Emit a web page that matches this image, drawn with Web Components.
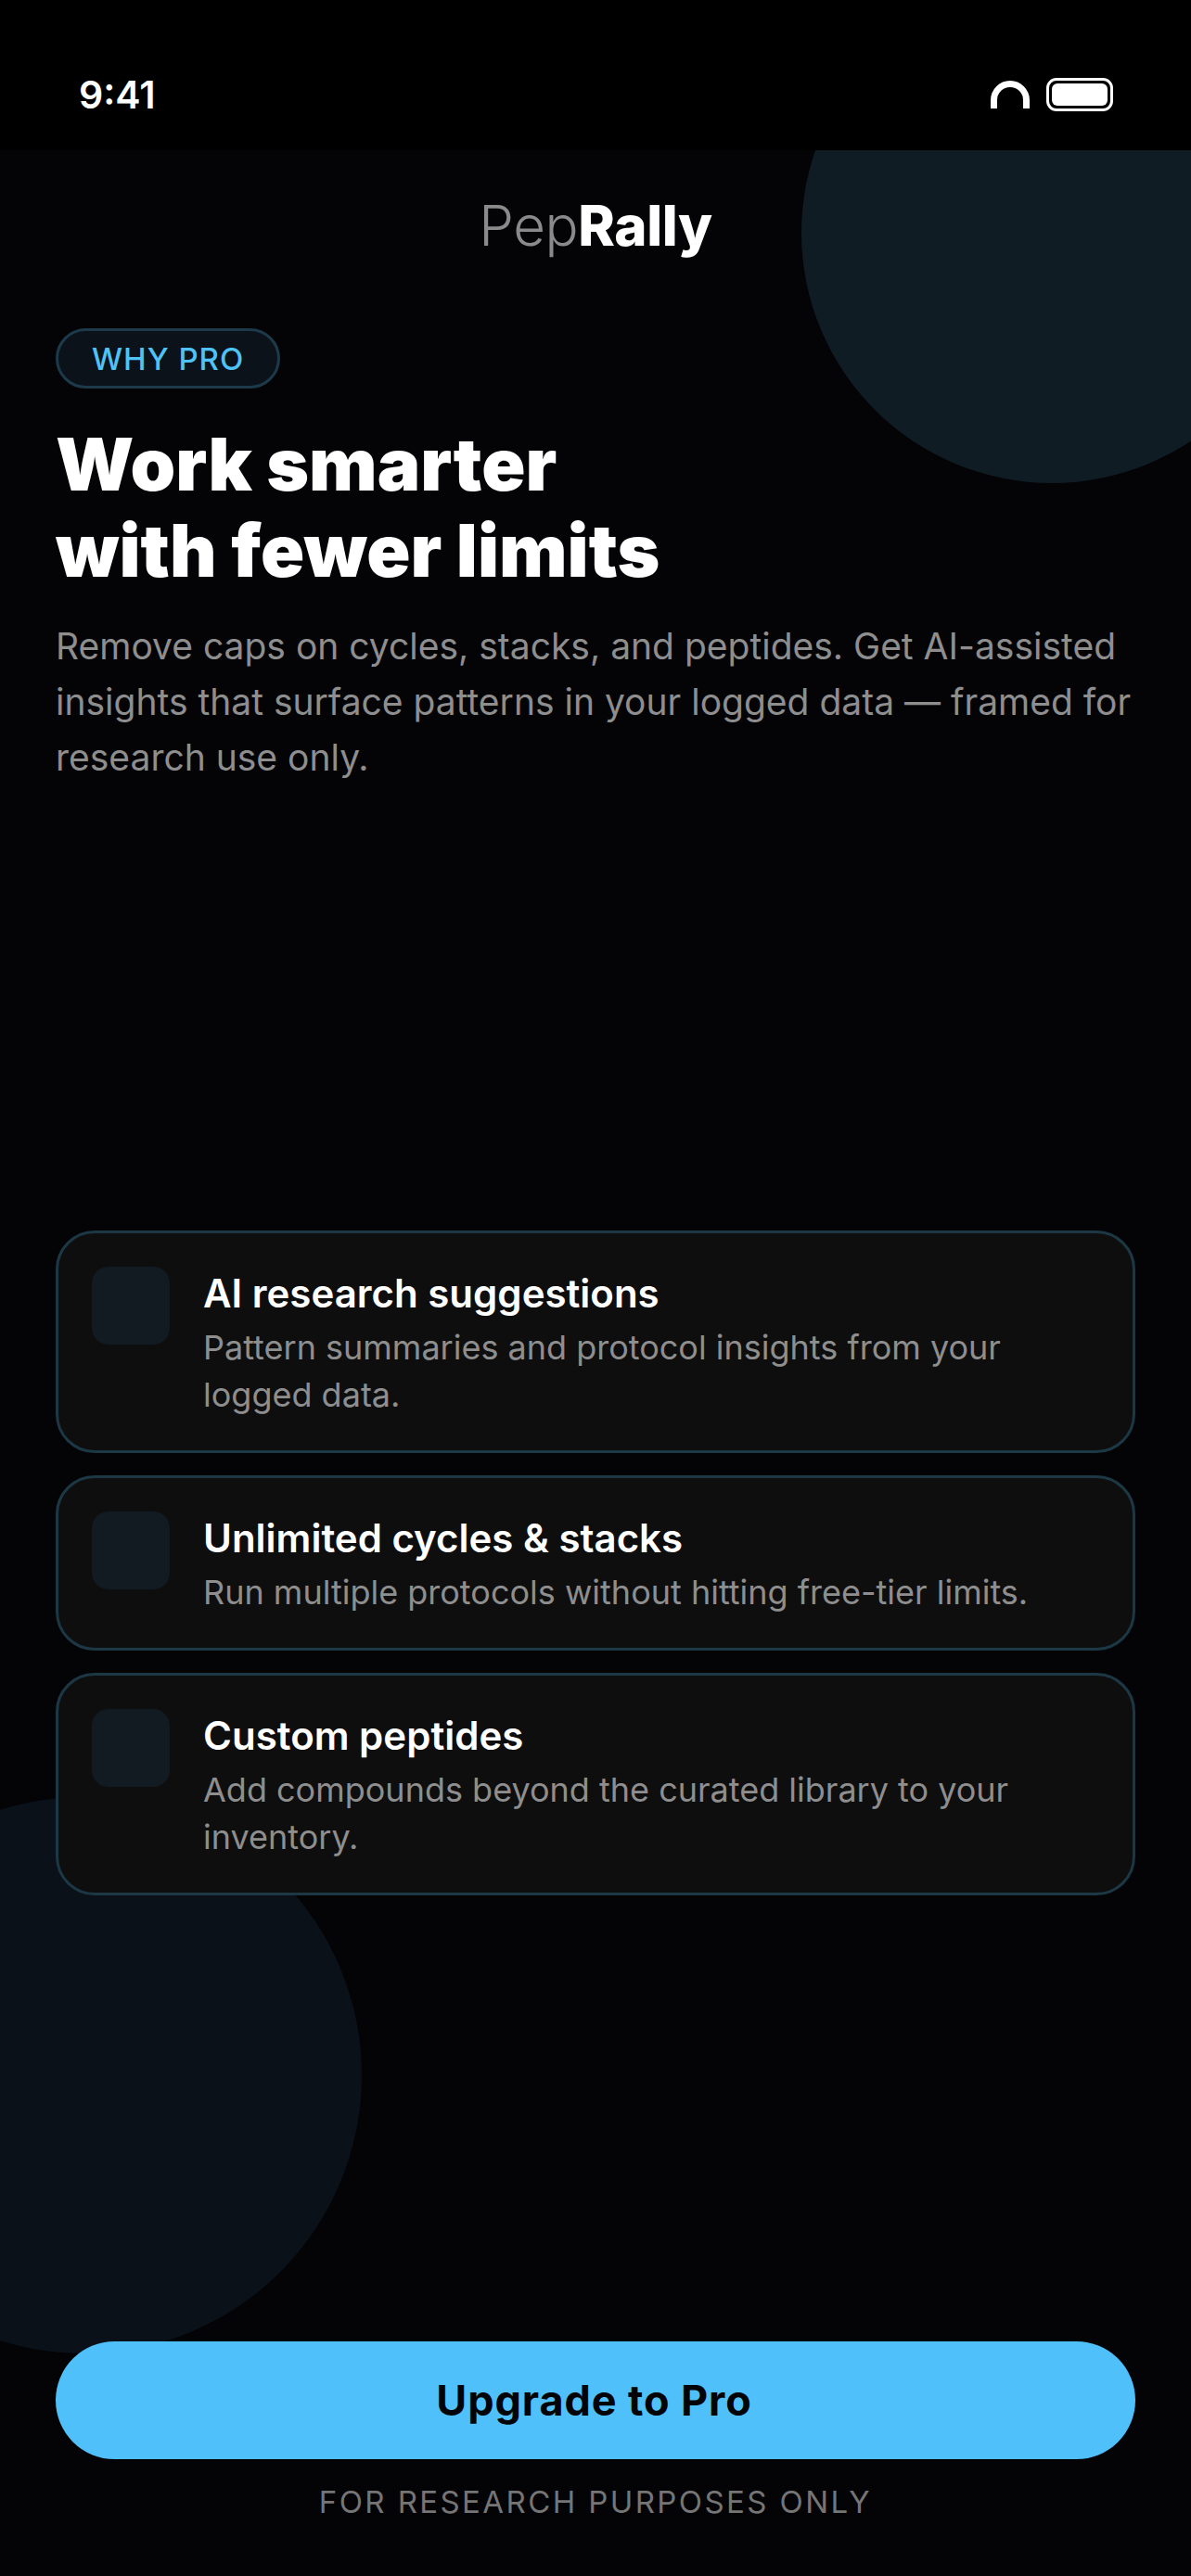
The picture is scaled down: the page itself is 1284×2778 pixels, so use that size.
<!DOCTYPE html>
<html lang="en">
<head>
<meta charset="utf-8">
<title>PepRally</title>
<style>
    html, body { margin: 0; background: #040407; }
    body { font-family: Inter, "Liberation Sans", sans-serif; }
</style>
</head>
<body>
<paywall-screen>
    <span slot="eyebrow">WHY PRO</span>
    <span slot="heading">Work smarter<br>with fewer limits</span>
    <span slot="lead">Remove caps on cycles, stacks, and peptides. Get AI-assisted insights that surface patterns in your logged data — framed for research use only.</span>
    <feature-card slot="features" title-text="AI research suggestions">Pattern summaries and protocol insights from your logged data.</feature-card>
    <feature-card slot="features" title-text="Unlimited cycles &amp; stacks">Run multiple protocols without hitting free-tier limits.</feature-card>
    <feature-card slot="features" title-text="Custom peptides">Add compounds beyond the curated library to your inventory.</feature-card>
    <span slot="cta">Upgrade to Pro</span>
    <span slot="note">FOR RESEARCH PURPOSES ONLY</span>
</paywall-screen>

<script>
class StatusBar extends HTMLElement {
    constructor() {
        super()
        this.attachShadow({ mode: 'open' })
        this.shadowRoot.innerHTML = `
            <style>
                :host {
                    display: flex;
                    flex: none;
                    align-items: flex-start;
                    justify-content: space-between;
                    height: 162px;
                    box-sizing: border-box;
                    padding: 75px 84px 0 85px;
                    background: #000;
                    color: #fff;
                }
                .time { font-size: 41px; font-weight: 600; line-height: 54px; }
                .icons { display: flex; gap: 18px; padding-top: 9px; }
                .battery {
                    box-sizing: border-box;
                    width: 72px;
                    height: 36px;
                    padding: 3px;
                    border: 3px solid #fff;
                    border-radius: 11px;
                }
                .battery div { height: 100%; background: #fff; border-radius: 6px; }
            </style>
            <span class="time">9:41</span>
            <div class="icons">
                <svg width="42" height="33" viewBox="0 0 42 33"><path d="M3.5 33V24a17.5 17.5 0 0 1 35 0v9" fill="none" stroke="#fff" stroke-width="7"/></svg>
                <div class="battery"><div></div></div>
            </div>
        `
    }
}

class FeatureCard extends HTMLElement {
    constructor() {
        super()
        this.attachShadow({ mode: 'open' })
        this.shadowRoot.innerHTML = `
            <style>
                :host {
                    display: flex;
                    gap: 36px;
                    box-sizing: border-box;
                    padding: 36px 36px 34px;
                    background: #0e0e0f;
                    border: 3px solid #1c3845;
                    border-radius: 42px;
                }
                .icon {
                    flex: none;
                    width: 84px;
                    height: 84px;
                    background: #121b21;
                    border-radius: 18px;
                }
                .title { color: #fff; font-size: 42px; font-weight: 600; line-height: 58px; }
                .desc { margin-top: 4px; color: #8e8e8e; font-size: 36px; line-height: 51px; }
            </style>
            <div class="icon"></div>
            <div>
                <div class="title"></div>
                <div class="desc"><slot></slot></div>
            </div>
        `
    }

    connectedCallback() {
        this.shadowRoot.querySelector('.title').textContent = this.getAttribute('title-text')
    }
}

class PaywallScreen extends HTMLElement {
    constructor() {
        super()
        this.attachShadow({ mode: 'open' })
        this.shadowRoot.innerHTML = `
            <style>
                :host {
                    display: flex;
                    flex-direction: column;
                    height: 2778px;
                    overflow: hidden;
                }
                main {
                    position: relative;
                    flex: 1;
                    display: flex;
                    flex-direction: column;
                    padding: 0 60px;
                    overflow: hidden;
                }
                main > * { position: relative; }
                .blob { position: absolute; border-radius: 50%; }
                .blob.top { width: 540px; height: 540px; top: -181px; right: -120px; background: #0f1c24; }
                .blob.bottom { width: 600px; height: 600px; top: 1776px; left: -210px; background: #0a1119; }
                .logo { margin-top: 45px; text-align: center; color: #8a8a8a; font-size: 60px; font-weight: 300; line-height: 72px; letter-spacing: -0.4px; }
                .logo b { color: #fff; font-weight: 800; }
                .pill {
                    align-self: flex-start;
                    margin-top: 75px;
                    padding: 0 36px;
                    height: 65px;
                    box-sizing: border-box;
                    display: flex;
                    align-items: center;
                    color: #4fc3f7;
                    background: #0b1219;
                    border: 3px solid #1c3a4a;
                    border-radius: 33px;
                    font-size: 33px;
                    font-weight: 500;
                    letter-spacing: 1px;
                }
                h1 { margin: 35px 0 0; color: #fff; font-size: 78px; font-weight: 900; line-height: 93px; }
                .lead { margin-top: 27px; color: #8e8e8e; font-size: 39px; line-height: 60px; }
                .features { margin-top: auto; display: flex; flex-direction: column; gap: 24px; }
                .cta {
                    margin-top: 481px;
                    height: 127px;
                    box-sizing: border-box;
                    padding-right: 3px;
                    display: flex;
                    align-items: center;
                    justify-content: center;
                    background: #4fc0fa;
                    color: #030407;
                    border-radius: 64px;
                    font-size: 45px;
                    font-weight: 700;
                    letter-spacing: 0.9px;
                }
                .note { margin: 25px 0 59px; text-align: center; color: #757575; font-size: 33px; line-height: 42px; letter-spacing: 2.4px; }
            </style>
            <status-bar></status-bar>
            <main>
                <div class="blob top"></div>
                <div class="blob bottom"></div>
                <div class="logo">Pep<b>Rally</b></div>
                <div class="pill"><slot name="eyebrow"></slot></div>
                <h1><slot name="heading"></slot></h1>
                <div class="lead"><slot name="lead"></slot></div>
                <div class="features"><slot name="features"></slot></div>
                <div class="cta"><slot name="cta"></slot></div>
                <div class="note"><slot name="note"></slot></div>
            </main>
        `
    }
}

customElements.define('status-bar', StatusBar)
customElements.define('feature-card', FeatureCard)
customElements.define('paywall-screen', PaywallScreen)
</script>
</body>
</html>
